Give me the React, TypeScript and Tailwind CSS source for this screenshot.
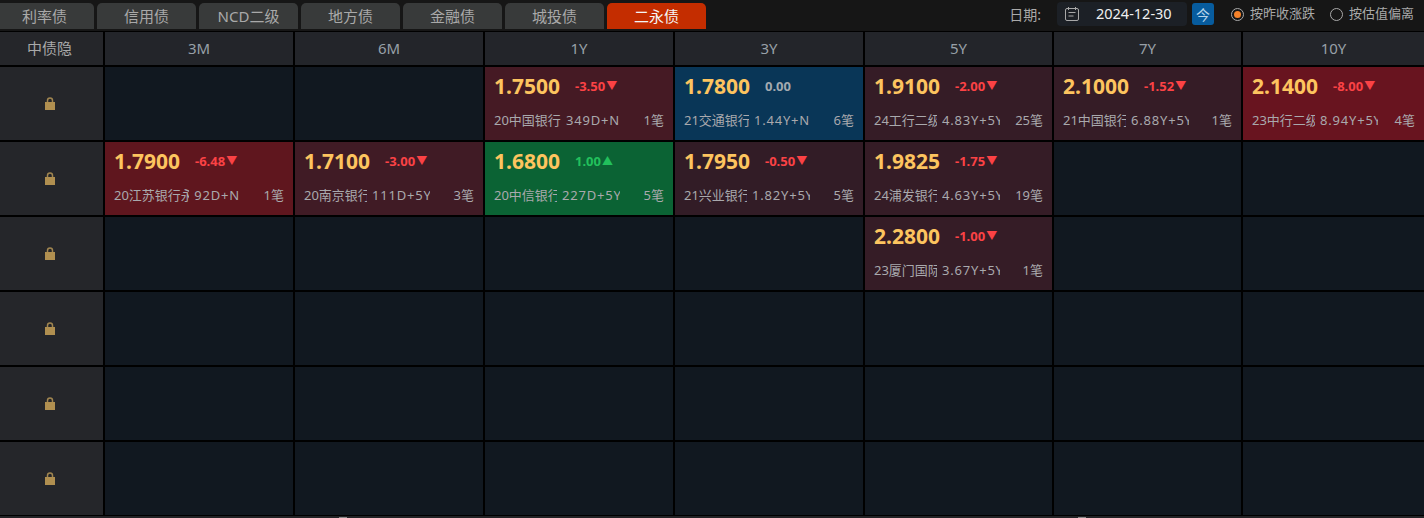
const tabs = ["利率债", "信用债", "NCD二级", "地方债", "金融债", "城投债", "二永债"];
const tenors = ["3M", "6M", "1Y", "3Y", "5Y", "7Y", "10Y"];

type Quote = { price: string; delta: string; dir: "down" | "up" | "flat"; name: string; term: string; count: string; bg: string };

const rows: (Quote | null)[][] = [
  [
    null,
    null,
    { price: "1.7500", delta: "-3.50", dir: "down", name: "20中国银行", term: "349D+N", count: "1笔", bg: "bg-[#451a24]" },
    { price: "1.7800", delta: "0.00", dir: "flat", name: "21交通银行", term: "1.44Y+N", count: "6笔", bg: "bg-[#093657]" },
    { price: "1.9100", delta: "-2.00", dir: "down", name: "24工行二级资本债", term: "4.83Y+5Y", count: "25笔", bg: "bg-[#351c26]" },
    { price: "2.1000", delta: "-1.52", dir: "down", name: "21中国银行二级", term: "6.88Y+5Y", count: "1笔", bg: "bg-[#351c26]" },
    { price: "2.1400", delta: "-8.00", dir: "down", name: "23中行二级资本债", term: "8.94Y+5Y", count: "4笔", bg: "bg-[#68141f]" },
  ],
  [
    { price: "1.7900", delta: "-6.48", dir: "down", name: "20江苏银行永续", term: "92D+N", count: "1笔", bg: "bg-[#5f161e]" },
    { price: "1.7100", delta: "-3.00", dir: "down", name: "20南京银行二级", term: "111D+5Y", count: "3笔", bg: "bg-[#401b25]" },
    { price: "1.6800", delta: "1.00", dir: "up", name: "20中信银行二级", term: "227D+5Y", count: "5笔", bg: "bg-[#0b6334]" },
    { price: "1.7950", delta: "-0.50", dir: "down", name: "21兴业银行二级", term: "1.82Y+5Y", count: "5笔", bg: "bg-[#321c26]" },
    { price: "1.9825", delta: "-1.75", dir: "down", name: "24浦发银行二级", term: "4.63Y+5Y", count: "19笔", bg: "bg-[#351c26]" },
    null,
    null,
  ],
  [
    null,
    null,
    null,
    null,
    { price: "2.2800", delta: "-1.00", dir: "down", name: "23厦门国际银行", term: "3.67Y+5Y", count: "1笔", bg: "bg-[#351c26]" },
    null,
    null,
  ],
  [null, null, null, null, null, null, null],
  [null, null, null, null, null, null, null],
  [null, null, null, null, null, null, null],
];

function Lock() {
  return (
    <svg width="10" height="13" viewBox="0 0 10 13" className="block">
      <path d="M2.5 6V3.4C2.5 1.9 3.5 1 5 1s2.5.9 2.5 2.4V6" fill="none" stroke="#a08550" strokeWidth="1.5" />
      <rect x="0" y="5" width="10" height="8" fill="#b08f50" />
    </svg>
  );
}

function Calendar() {
  return (
    <svg width="14" height="14" viewBox="0 0 14 14" fill="none" stroke="#a8a8a8" strokeWidth="1">
      <rect x="0.5" y="1.5" width="13" height="12" rx="1.5" />
      <path d="M3.5 0v3M10.5 0v3M3.5 5.5h7M3.5 9h5" />
    </svg>
  );
}

function Cell({ q }: { q: Quote | null }) {
  if (!q) return <div className="bg-[#111820]" />;
  const deltaColor = q.dir === "down" ? "text-[#fb4245]" : q.dir === "up" ? "text-[#22c05c]" : "text-[#a3aab0]";
  return (
    <div className={`${q.bg} flex flex-col pl-[9px] pr-[9px] pt-[5px] min-w-0`}>
      <div className="flex items-center h-[28px]">
        <span className="w-[65px] text-[21px] leading-[28px] font-bold text-[#fdc45f]">{q.price}</span>
        <span className={`ml-[16px] flex items-center text-[13px] font-bold leading-[28px] ${deltaColor}`}>
          {q.delta}
          {q.dir !== "flat" && (
            <span className="ml-[1px] text-[11px]">{q.dir === "down" ? "▼" : "▲"}</span>
          )}
        </span>
      </div>
      <div className="mt-[10px] flex items-center h-[20px] text-[13px] leading-[20px] text-[#a9a9ad] whitespace-nowrap">
        <div className="flex w-[126px] gap-[5px] shrink-0">
          <span className="flex-1 min-w-0 overflow-hidden">{q.name}</span>
          <span className="max-w-[58px] overflow-hidden shrink-0 tracking-[0.8px]">{q.term}</span>
        </div>
        <span className="ml-auto shrink-0">{q.count}</span>
      </div>
    </div>
  );
}

export default function App() {
  return (
    <div className="w-[1424px] h-[518px] overflow-hidden bg-black flex flex-col font-['Noto_Sans','Noto_Sans_CJK_SC',sans-serif]">
      <div className="h-[31px] shrink-0 bg-[#161616] flex items-end justify-between pr-[10px] overflow-hidden">
        <div className="flex gap-[3px] -ml-[5px] pb-[2px]">
          {tabs.map((t, i) => (
            <div
              key={t}
              className={`w-[99px] h-[26px] rounded-t-[5px] flex items-center justify-center text-[15px] ${
                i === 6 ? "bg-[#c42d00] text-[#f5f5f5]" : "bg-[#383a3a] text-[#a9a9a9]"
              }`}
            >
              {t}
            </div>
          ))}
        </div>
        <div className="flex items-center h-[31px] pb-[3px] text-[13px] text-[#a9a9a9]">
          <span className="text-[14px]">日期:</span>
          <div className="ml-[16px] w-[130px] h-[24px] rounded-[4px] bg-[#1c2026] flex items-center pl-[8px]">
            <Calendar />
            <span className="ml-[17px] text-[14.5px] text-[#f0f0f0]">2024-12-30</span>
          </div>
          <div className="ml-[5px] w-[22px] h-[22px] rounded-[3px] bg-[#075c9e] flex items-center justify-center text-[14px] text-[#b8d4ea]">
            今
          </div>
          <div className="ml-[17px] w-[13px] h-[13px] rounded-full border border-[#a9a9a9] flex items-center justify-center">
            <div className="w-[7px] h-[7px] rounded-full bg-[#f5822a]" />
          </div>
          <span className="ml-[6px]">按昨收涨跌</span>
          <div className="ml-[15px] w-[13px] h-[13px] rounded-full border border-[#a9a9a9]" />
          <span className="ml-[6px]">按估值偏离</span>
        </div>
      </div>

      <div className="mt-px grid grid-cols-[103px_188px_188px_188px_188px_187px_187px_181px] grid-rows-[33px_repeat(6,73px)] gap-[2px] h-[484px]">
        <div className="bg-[#25262a] flex items-center justify-center pr-1 text-[15px] text-[#a9a9a9]">中债隐</div>
        {tenors.map((t) => (
          <div key={t} className="bg-[#23252a] flex items-center justify-center text-[15px] text-[#98a0a8]">
            {t}
          </div>
        ))}
        {rows.map((row, r) => [
          <div key={`l${r}`} className="bg-[#25262a] flex items-center justify-center pr-[3px]">
            <Lock />
          </div>,
          ...row.map((q, c) => <Cell key={`${r}-${c}`} q={q} />),
        ])}
      </div>

      <div className="flex-1 bg-[#222326] relative">
        <div className="absolute left-[339px] top-[1px] w-[8px] h-px bg-[#8a8a8a]" />
        <div className="absolute left-[1078px] top-[1px] w-[8px] h-px bg-[#8a8a8a]" />
      </div>
    </div>
  );
}
